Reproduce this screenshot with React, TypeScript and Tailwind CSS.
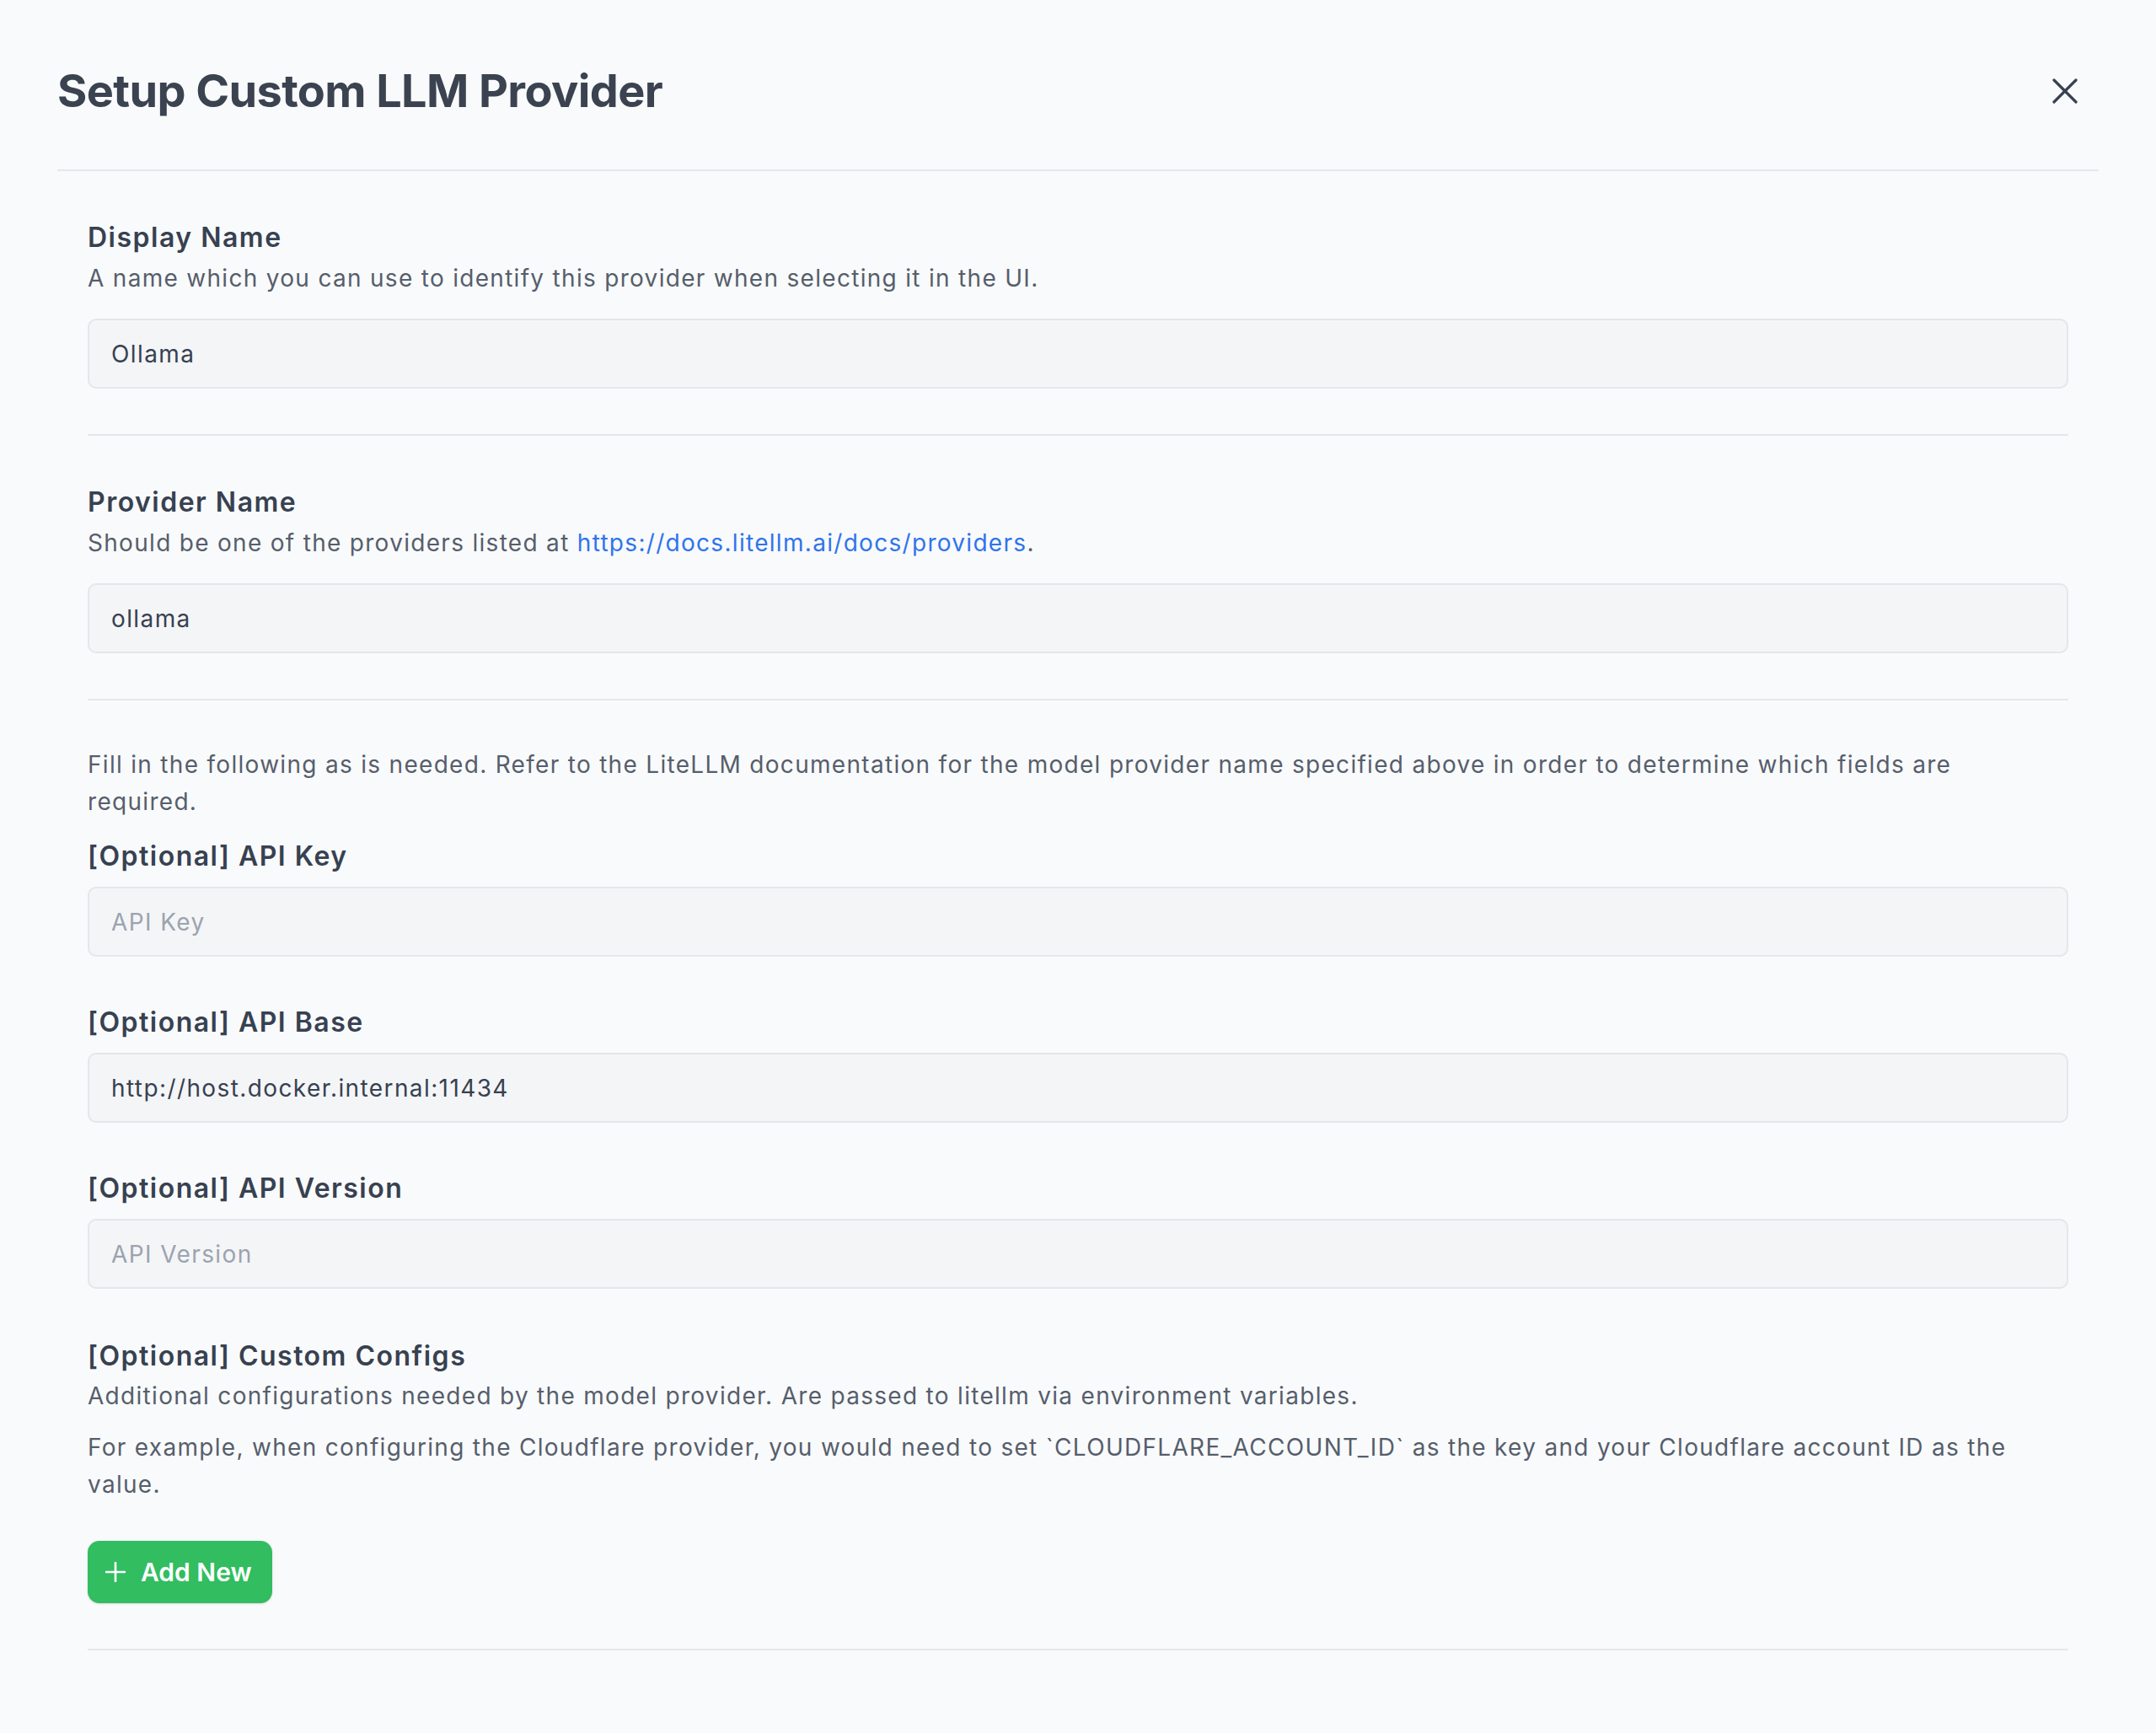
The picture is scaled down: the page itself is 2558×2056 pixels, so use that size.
import React from 'react';

interface FieldProps {
  label: string;
  value?: string;
  placeholder?: string;
}

function CloseIcon() {
  return (
    <svg width="30" height="30" viewBox="-2 -2 30 30" fill="none" stroke="#374151" strokeWidth="3.2" strokeLinecap="round">
      <path d="M0 0 L26 26" />
      <path d="M26 0 L0 26" />
    </svg>
  );
}

function PlusIcon() {
  return (
    <svg width="24" height="24" viewBox="-1 -1 24 24" fill="none" stroke="white" strokeWidth="2.6" strokeLinecap="round">
      <path d="M11 0 V22" />
      <path d="M0 11 H22" />
    </svg>
  );
}

function TextInput({ value, placeholder }: { value?: string; placeholder?: string }) {
  return (
    <input
      type="text"
      defaultValue={value}
      placeholder={placeholder}
      className="block w-full h-[83px] rounded-[10px] border-2 border-[#e4e6ea] bg-[#f4f5f7] px-[26px] text-[28px] tracking-[1.4px] text-[#374151] placeholder:text-[#9ca3af] outline-none"
    />
  );
}

function OptionalField({ label, value, placeholder }: FieldProps) {
  return (
    <div>
      <label className="block text-[32px] leading-[44px] tracking-[1.5px] font-semibold text-[#374151]">{label}</label>
      <div className="mt-[14px]">
        <TextInput value={value} placeholder={placeholder} />
      </div>
    </div>
  );
}

export default function App() {
  return (
    <div className="min-h-screen bg-[#f9fafb] font-[Inter,'Noto_Sans',sans-serif] text-[#374151]">
      <div className="px-[68px]">
        {/* header */}
        <div className="flex items-center justify-between border-b-2 border-[#e5e7eb] pt-[76px] pb-[61px]">
          <h1 className="text-[54px] leading-[64px] tracking-[-0.6px] font-bold text-[#3b4250]">
            Setup Custom LLM Provider
          </h1>
          <button type="button" className="mr-[25px]">
            <CloseIcon />
          </button>
        </div>

        <div className="px-[36px]">
          {/* display name */}
          <div className="pt-[57px] pb-[54px] border-b-2 border-[#e5e7eb]">
            <label className="block text-[32px] leading-[44px] tracking-[1.5px] font-semibold">Display Name</label>
            <p className="mt-[4px] text-[28px] leading-[44px] tracking-[1.3px] text-[#565e6c]">
              A name which you can use to identify this provider when selecting it in the UI.
            </p>
            <div className="mt-[26px]">
              <TextInput value="Ollama" />
            </div>
          </div>

          {/* provider name */}
          <div className="pt-[57px] pb-[54px] border-b-2 border-[#e5e7eb]">
            <label className="block text-[32px] leading-[44px] tracking-[1.5px] font-semibold">Provider Name</label>
            <p className="mt-[4px] text-[28px] leading-[44px] tracking-[1.3px] text-[#565e6c]">
              Should be one of the providers listed at{' '}
              <a href="#" className="text-[#2f74ec]">
                https://docs.litellm.ai/docs/providers
              </a>
              .
            </p>
            <div className="mt-[26px]">
              <TextInput value="ollama" />
            </div>
          </div>

          {/* optional fields */}
          <div className="pt-[54px] pb-[54px] border-b-2 border-[#e5e7eb]">
            <p className="text-[28px] leading-[44px] tracking-[1.3px] text-[#565e6c]">
              Fill in the following as is needed. Refer to the LiteLLM documentation for the model provider name
              specified above in order to determine which fields are required.
            </p>
            <div className="mt-[21px] flex flex-col gap-[56px]">
              <OptionalField label="[Optional] API Key" placeholder="API Key" />
              <OptionalField label="[Optional] API Base" value="http://host.docker.internal:11434" />
              <OptionalField label="[Optional] API Version" placeholder="API Version" />

              <div className="mt-[2px]">
                <label className="block text-[32px] leading-[44px] tracking-[1.5px] font-semibold">
                  [Optional] Custom Configs
                </label>
                <p className="mt-[3px] text-[28px] leading-[44px] tracking-[1.3px] text-[#565e6c]">
                  Additional configurations needed by the model provider. Are passed to litellm via environment
                  variables.
                </p>
                <p className="mt-[17px] text-[28px] leading-[44px] tracking-[1.3px] text-[#565e6c]">
                  For example, when configuring the Cloudflare provider, you would need to set
                  `CLOUDFLARE_ACCOUNT_ID` as the key and your Cloudflare account ID as the value.
                </p>
                <button
                  type="button"
                  className="mt-[45px] flex items-center gap-[18px] h-[74px] pl-[21px] pr-[24px] rounded-[14px] bg-[#31bd60] text-white text-[30px] font-semibold shadow-sm"
                >
                  <PlusIcon />
                  Add New
                </button>
              </div>
            </div>
          </div>
        </div>
      </div>
    </div>
  );
}
